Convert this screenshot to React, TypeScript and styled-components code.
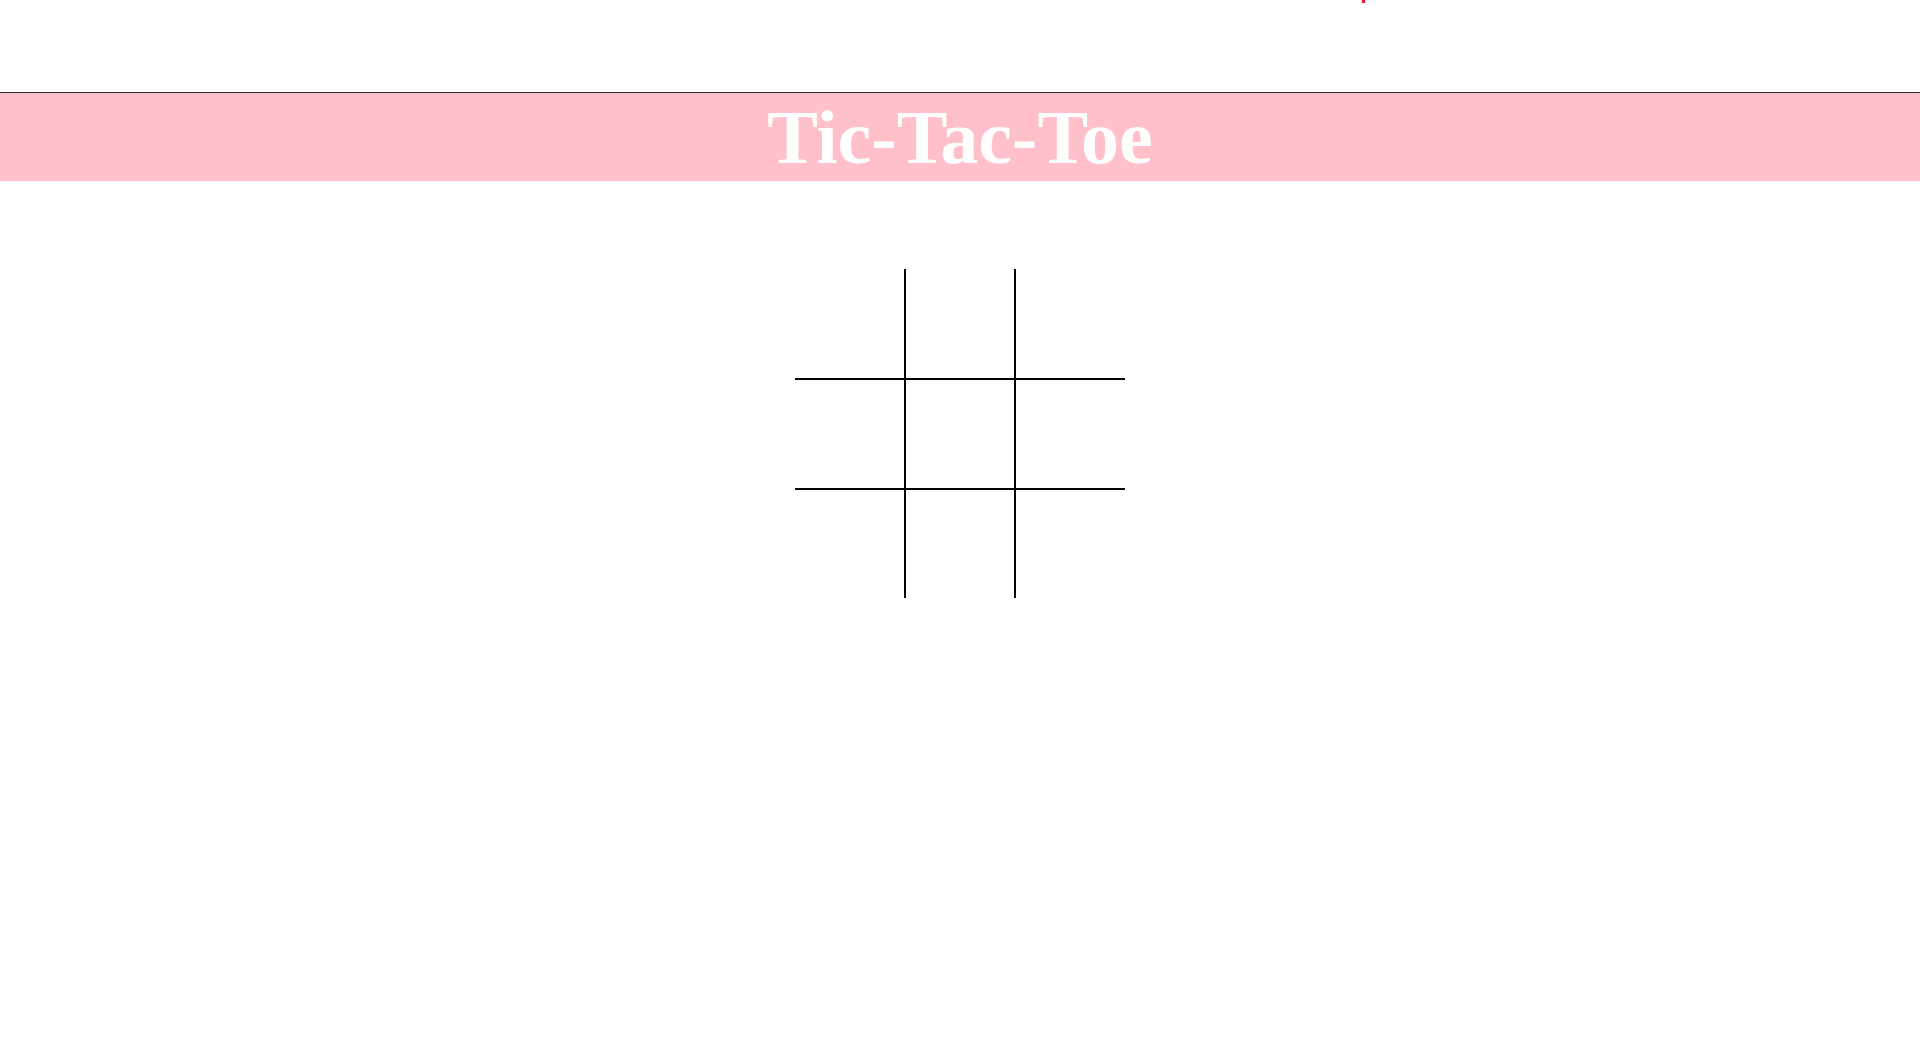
import React from "react";
import styled, { createGlobalStyle } from "styled-components";

const GlobalStyle = createGlobalStyle`
  html, body {
    margin: 0;
    padding: 0;
    background: #ffffff;
  }
  body {
    font-family: "Liberation Serif", "Times New Roman", serif;
  }
`;

const Page = styled.div`
  position: relative;
  min-height: 1040px;
  padding-top: 92px;
  box-sizing: border-box;
`;

const Marker = styled.span`
  position: absolute;
  top: 0;
  left: 1362px;
  width: 3px;
  height: 3px;
  background: #ee1c1c;
`;

const Header = styled.header`
  border-top: 1px solid #2b2b2b;
  background: #ffc0cb;
`;

const Title = styled.h1`
  margin: 0;
  text-align: center;
  color: #ffffff;
  font-family: "Liberation Serif", "Times New Roman", serif;
  font-weight: 700;
  font-size: 76px;
  line-height: 88px;
`;

const Board = styled.div`
  display: grid;
  grid-template-columns: repeat(3, 110px);
  grid-template-rows: 110px 110px 109px;
  width: 330px;
  margin: 88px auto 0;
`;

const Cell = styled.button<{ $row: number; $col: number }>`
  box-sizing: border-box;
  width: 110px;
  height: 100%;
  padding: 0;
  margin: 0;
  background: transparent;
  border: none;
  border-top: ${(p) => (p.$row > 0 ? "1px solid #000" : "none")};
  border-bottom: ${(p) => (p.$row < 2 ? "1px solid #000" : "none")};
  border-left: ${(p) => (p.$col > 0 ? "1px solid #000" : "none")};
  border-right: ${(p) => (p.$col < 2 ? "1px solid #000" : "none")};
  font-family: "Liberation Serif", serif;
  font-size: 64px;
  cursor: pointer;
`;

export default function App() {
  const [cells, setCells] = React.useState<string[]>(Array(9).fill(""));
  const [turn, setTurn] = React.useState<"X" | "O">("X");

  const play = (i: number) => {
    if (cells[i]) return;
    const next = cells.slice();
    next[i] = turn;
    setCells(next);
    setTurn(turn === "X" ? "O" : "X");
  };

  return (
    <>
      <GlobalStyle />
      <Page>
        <Marker />
        <Header>
          <Title>Tic-Tac-Toe</Title>
        </Header>
        <Board>
          {cells.map((v, i) => (
            <Cell
              key={i}
              $row={Math.floor(i / 3)}
              $col={i % 3}
              onClick={() => play(i)}
            >
              {v}
            </Cell>
          ))}
        </Board>
      </Page>
    </>
  );
}
